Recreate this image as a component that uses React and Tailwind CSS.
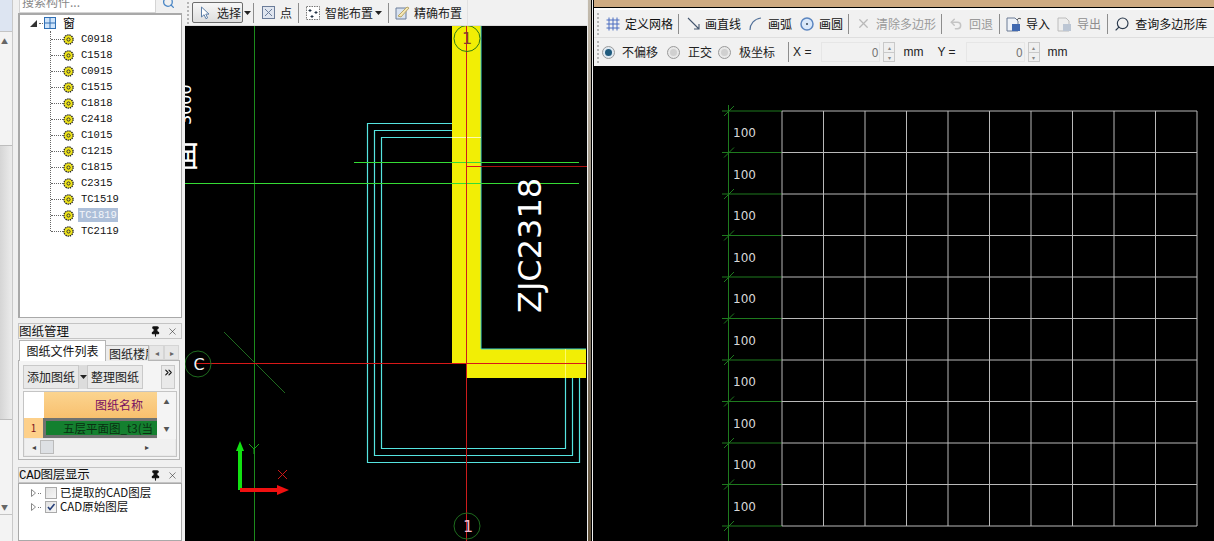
import React from 'react'
import { ChevronsRight, Pin, X, Search, Undo2 } from 'lucide-react'

const WINDOWS = ['C0918', 'C1518', 'C0915', 'C1515', 'C1818', 'C2418', 'C1015', 'C1215', 'C1815', 'C2315', 'TC1519', 'TC1819', 'TC2119']
const GRID_X = [782, 823.5, 865, 906.5, 948, 989.5, 1031, 1072.5, 1114, 1155.5, 1197]
const GRID_Y = [111, 152.5, 194, 235.5, 277, 318.5, 360, 401.5, 443, 484.5, 526]

const Gear = () => (
  <svg width="11" height="11" viewBox="0 0 11 11" className="shrink-0">
    <circle cx="5.5" cy="5.5" r="4.6" fill="#f3e81a" stroke="#222" strokeWidth="1.3" strokeDasharray="1.4 0.8" />
    <circle cx="5.5" cy="5.5" r="1.6" fill="#f3e81a" stroke="#333" strokeWidth="1" />
  </svg>
)

const Sep = ({ className = '' }) => <div className={`w-px h-[20px] bg-[#8d8d8d] shrink-0 ${className}`} />

const Grip = () => <div className="w-[2px] h-[22px] border-l-2 border-dotted border-[#b5b5b5] shrink-0" />

const Caret = ({ className = '' }) => (
  <svg width="7" height="4" viewBox="0 0 7 4" className={`shrink-0 ${className}`}><path d="M0 0h7L3.5 4z" fill="#222" /></svg>
)

const PanelTitle = ({ children }) => (
  <div className="h-[16px] w-[164px] flex items-center bg-[#efefef] border border-[#c4c4c4] text-[12.5px] leading-none text-[#111] overflow-hidden">
    <span className="whitespace-nowrap flex-1">{children}</span>
    <Pin size={11} strokeWidth={2.4} color="#111" fill="#111" className="mr-[6px]" />
    <X size={11} strokeWidth={1.2} color="#222" className="mr-[3px]" />
  </div>
)

const Tree = () => (
  <div className="h-[305px] w-[164px] bg-white border-2 border-[#a9a9a9] border-r border-b overflow-hidden">
    <div className="h-[16px] flex items-center pl-[10px]">
      <svg width="7" height="7" viewBox="0 0 7 7" className="shrink-0"><path d="M7 0v7H0z" fill="#333" /></svg>
      <div className="w-[4px] border-t border-dotted border-[#666] ml-[2px] mr-[1px]" />
      <svg width="12" height="12" viewBox="0 0 12 12" className="shrink-0">
        <rect x="0.5" y="0.5" width="11" height="11" fill="#cfe4fa" stroke="#2f6fb5" />
        <path d="M6 1v10M1 6h10" stroke="#2f6fb5" />
      </svg>
      <span className="ml-[7px] text-[12px] leading-none text-black">窗</span>
    </div>
    <div className="ml-[30px] h-[200px] border-l border-dotted border-[#666]">
      {WINDOWS.map((name) => (
        <div key={name} className="h-[16px] flex items-center">
          <div className="w-[12px] border-t border-dotted border-[#666] shrink-0" />
          <Gear />
          {name === 'TC1819' ? (
            <span className="ml-[5px] px-[1px] -translate-x-px bg-[#adbfd9] text-[#f4f6fa] font-['Liberation_Mono',monospace] text-[10.5px] leading-[14px]">{name}</span>
          ) : (
            <span className="ml-[7px] text-[#111] font-['Liberation_Mono',monospace] text-[10.5px] leading-[14px]">{name}</span>
          )}
        </div>
      ))}
    </div>
  </div>
)

const DrawingsPanel = () => (
  <div className="w-[164px]">
    <PanelTitle>图纸管理</PanelTitle>
    <div className="h-[22px] flex items-end pl-px relative z-10">
      <div className="h-[21px] w-[87px] bg-white border border-b-0 border-[#b5b5b5] text-[12px] leading-[20px] text-center text-[#111]">图纸文件列表</div>
      <div className="h-[16px] w-[43px] bg-[#ececec] border-t border-r border-[#b5b5b5] text-[12px] leading-[15px] pl-[3px] overflow-hidden whitespace-nowrap text-[#222]">图纸楼层</div>
      <div className="h-[15px] w-[15px] mb-[1px] bg-[#e6e6e6] border border-[#d5d5d5] text-[8px] leading-[13px] text-center text-[#666]">◂</div>
      <div className="h-[15px] w-[15px] mb-[1px] bg-[#e6e6e6] border border-[#d5d5d5] text-[8px] leading-[13px] text-center text-[#666]">▸</div>
    </div>
    <div className="h-[100px] w-[162px] bg-[#f4f4f4] border border-[#b5b5b5] -mt-px p-[4px]">
      <div className="h-[24px] flex text-[12px] leading-[22px] text-[#222]">
        <div className="w-[58px] bg-[#e9e9e9] border border-[#c9c9c9] text-center">添加图纸</div>
        <div className="w-[8px] bg-[#dcdcdc] flex items-center justify-center"><Caret /></div>
        <div className="w-[58px] bg-[#e9e9e9] border border-[#c9c9c9] text-center">整理图纸</div>
        <div className="w-[19px]" />
        <div className="w-[14px] bg-[#e9e9e9] border border-[#c9c9c9] flex justify-center pt-[1px]"><ChevronsRight size={11} strokeWidth={2.4} color="#111" /></div>
      </div>
      <div className="mt-[2px] h-[66px] w-[154px] bg-[#e9e9e9] border border-[#c4c4c4]">
        <div className="flex h-[47px]">
          <div className="w-[133px] shrink-0">
            <div className="flex h-[26px]">
              <div className="w-[20px] bg-white" />
              <div className="w-[113px] bg-gradient-to-b from-[#fbd48f] to-[#f8c06e] text-[12px] leading-[26px] text-[#7a1060] pl-[51px] whitespace-nowrap">图纸名称</div>
            </div>
            <div className="flex h-[20px]">
              <div className="w-[19px] bg-[#fdd08a] text-[10px] leading-[20px] text-center text-[#7a1020]">1</div>
              <div className="w-[114px] bg-[#14802f] border-[3px] border-[#6f7270] border-r-0 text-[11.5px] leading-[14px] text-[#0a2f12] pl-[17px] whitespace-nowrap overflow-hidden">五层平面图_t3(当</div>
            </div>
          </div>
          <div className="flex-1 flex flex-col items-center justify-between py-[7px] bg-[#f4f4f4] text-[6px] leading-none text-[#555]">
            <span>▲</span>
            <span>▼</span>
          </div>
        </div>
        <div className="h-[16px] flex items-center bg-[#f0f0f0] text-[8px] text-[#444] mx-px">
          <span className="ml-[7px]">◂</span>
          <div className="ml-[4px] w-[14px] h-[14px] bg-[#dde0e4] border border-[#bbb]" />
          <span className="ml-[91px]">▸</span>
        </div>
      </div>
    </div>
  </div>
)

const LayerRow = ({ label, checked }) => (
  <div className="h-[14px] flex items-center pl-[12px]">
    <svg width="5" height="8" viewBox="0 0 5 8" className="shrink-0"><path d="M.5.5 4.500 4 .5 7.500z" fill="#fff" stroke="#888" /></svg>
    <div className="w-[3px] border-t border-dotted border-[#777] ml-[2px] mr-[4px]" />
    <div className="w-[12px] h-[12px] bg-gradient-to-br from-[#e2e2e2] to-[#f7f7f7] border border-[#aaa] flex items-center justify-center shrink-0">
      {checked && <svg width="10" height="10" viewBox="0 0 10 10"><path d="M2 5l2 2.500L8.500 2" fill="none" stroke="#27407a" strokeWidth="1.6" /></svg>}
    </div>
    <span className="ml-[3px] text-[11.5px] leading-none whitespace-nowrap text-[#111]">{label}</span>
  </div>
)

const LeftColumn = () => (
  <div className="w-[185px] h-full shrink-0 flex bg-[#f0f0f0] overflow-hidden">
    <div className="w-[18px] h-full shrink-0 flex">
      <div className="w-[13px] h-full flex flex-col bg-[#f3f3f3] border-r border-[#c9c9c9]">
        <div className="h-[32px] bg-[#dde5f2] border-b border-[#c4c4c4]" />
        <div className="h-[113px] pt-[6px] pl-[1px] text-[7px] leading-none text-[#666]">▲</div>
        <div className="h-[275px] bg-gradient-to-r from-[#d5d5d5] to-[#ececec] border-y border-[#bdbdbd]" />
        <div className="h-[94px] flex items-end pb-[3px] pl-[1px] text-[7px] leading-none text-[#666]">▼</div>
        <div className="flex-1 border-t border-[#c4c4c4]" />
      </div>
    </div>
    <div className="w-[164px] shrink-0 flex flex-col">
      <div className="h-[13px] flex items-end overflow-hidden pl-[1px]">
        <div className="w-[137px] h-[20px] bg-white border border-[#d4d4d4] text-[12px] leading-[16px] pl-[2px] text-[#888] whitespace-nowrap">搜索构件...</div>
        <div className="w-[25px] h-[13px] flex items-start justify-center"><Search size={13} strokeWidth={2.4} color="#4a86c5" className="-mt-[4px]" /></div>
      </div>
      <Tree />
      <div className="h-[5px]" />
      <DrawingsPanel />
      <div className="h-[7px]" />
      <PanelTitle><span className="font-['Liberation_Mono','Noto_Sans_CJK_SC',monospace] tracking-tight">CAD图层显示</span></PanelTitle>
      <div className="flex-1 bg-white border border-[#a9a9a9] pt-[2px]">
        <LayerRow label="已提取的CAD图层" />
        <LayerRow label="CAD原始图层" checked />
      </div>
    </div>
  </div>
)

const CenterToolbar = () => (
  <div className="h-[26px] shrink-0 flex items-center bg-[#f1f1f1] border-b border-[#dcdcdc] text-[12px] text-[#222] pl-[2px] whitespace-nowrap">
    <Grip />
    <div className="ml-[3px] h-[21px] w-[51px] flex items-center pl-[7px] bg-gradient-to-b from-[#f7f7f7] to-[#dedede] border border-[#6d6d6d] rounded-[2px]">
      <svg width="10" height="14" viewBox="0 0 10 14"><path d="M1.5 1v10l2.600-2.300 1.800 4 1.700-.8-1.800-3.800h3.200z" fill="#fff" stroke="#5d7fa8" /></svg>
      <span className="ml-[7px]">选择</span>
    </div>
    <Caret className="ml-[1px]" />
    <Sep className="ml-[2px]" />
    <svg width="13" height="13" viewBox="0 0 13 13" className="ml-[8px]"><rect x=".5" y=".5" width="12" height="12" fill="#dfe5ef" stroke="#6b7c99" /><path d="M3 3l7 7M10 3l-7 7" stroke="#6b7c99" /></svg>
    <span className="ml-[5px]">点</span>
    <Sep className="ml-[6px]" />
    <svg width="14" height="14" viewBox="0 0 14 14" className="ml-[7px]"><rect x=".5" y=".5" width="13" height="13" fill="#fff" stroke="#777" strokeDasharray="1.500 1" /><path d="M4 3v3M2.500 4.500h3M10 5v3M8.500 6.500h3M6 9v3M4.500 10.500h3" stroke="#234" /></svg>
    <span className="ml-[5px]">智能布置</span>
    <Caret className="ml-[2px]" />
    <Sep className="ml-[6px]" />
    <svg width="15" height="15" viewBox="0 0 15 15" className="ml-[6px]"><path d="M1 3h10v11H1z" fill="#d8e2f0" stroke="#6b7c99" /><path d="M3 11l9-9 2 1-8 9z" fill="#f5e7b5" stroke="#b9a76a" /></svg>
    <span className="ml-[4px]">精确布置</span>
    <div className="ml-[5px] w-px h-full bg-[#e2e2e2]" />
  </div>
)

const CadCanvas = () => (
  <svg viewBox="185 26 402 515" className="w-full flex-1 min-h-0 bg-black block">
    <path d="M452 26H481V349H586V378H467V363H452Z" fill="#f2ee05" />
    <path d="M481 26V349H586" fill="none" stroke="#3fd8d0" strokeWidth="1" />
    <path d="M565.500 349V378" stroke="#fdfa6a" />
    <g fill="none" stroke="#55e4e0" strokeWidth="1.200">
      <path d="M452 123.500H367.500V462.500H579.500V378" />
      <path d="M452 130.500H374.500V455.500H572.500V378" />
      <path d="M452 137.500H381.500V448.500H565.500V378" />
    </g>
    <path d="M452 137.500H481" stroke="#fbf9b0" />
    <path d="M254.500 26V541" stroke="#1c8a1c" />
    <path d="M224 332L285 393" stroke="#1f6b1f" />
    <path d="M354 162.500H579M185 183.500H579" stroke="#35dc35" />
    <path d="M466.500 26V541" stroke="#cc1c1c" />
    <path d="M195 363.500H586" stroke="#d81818" />
    <path d="M467 166.500H481" stroke="#d81818" />
    <path d="M481 166.500H587" stroke="#a81010" />
    <circle cx="467" cy="38.500" r="13" fill="none" stroke="#2d7a14" />
    <circle cx="198" cy="364" r="13" fill="none" stroke="#1e6b1e" />
    <circle cx="467" cy="526" r="13" fill="none" stroke="#1e6b1e" />
    <text x="467" y="44" textAnchor="middle" fontSize="16" fontFamily="DejaVu Sans, sans-serif" fill="#8a3a30">1</text>
    <text x="199" y="370" textAnchor="middle" fontSize="16" fontFamily="DejaVu Sans, sans-serif" fill="#f2f2f2">C</text>
    <text x="468" y="532" textAnchor="middle" fontSize="16" fontFamily="DejaVu Sans, sans-serif" fill="#f4b8cc">1</text>
    <text transform="translate(541 313) rotate(-90)" fontSize="32" fontFamily="DejaVu Sans, sans-serif" fill="#fff">ZJC2318</text>
    <text transform="translate(191 125) rotate(-90)" fontSize="16" fontFamily="DejaVu Sans, sans-serif" fill="#fff">3000</text>
    <text transform="translate(194 172) rotate(-90)" fontSize="32" fontFamily="Noto Sans CJK SC, sans-serif" fill="#fff">面</text>
    <path d="M240 490V449" stroke="#12e012" strokeWidth="4" />
    <path d="M240 441l-4 10h8z" fill="#12e012" />
    <path d="M240 490H278" stroke="#f01010" strokeWidth="4" />
    <path d="M289 490l-12-5v10z" fill="#f01010" />
    <path d="M249 444l5 5 5-5M254 449v5" fill="none" stroke="#18a018" />
    <path d="M278 470l9 9M287 470l-9 9" stroke="#d01818" />
  </svg>
)

const Radio = ({ on }) => (
  <div className={`w-[13px] h-[13px] rounded-full border border-[#9a9a9a] flex items-center justify-center shrink-0 ${on ? 'bg-[#dfe9f2]' : 'bg-[#e8e8e8]'}`}>
    <div className={`w-[7px] h-[7px] rounded-full ${on ? 'bg-[#1f5a7d]' : 'bg-[#d0d0d0]'}`} />
  </div>
)

const Spin = ({ inputWidth, className = '' }) => (
  <div className={`flex items-center shrink-0 ${className}`}>
    <div className={`h-[20px] bg-[#f1f1f1] border border-[#e6e6e6] text-right pr-[1px] text-[12px] leading-[18px] text-[#777] ${inputWidth}`}>0</div>
    <div className="ml-[3px] w-[12px] h-[20px] flex flex-col border border-[#c9c9c9] bg-[#efefef] text-[6px] leading-[9px] text-center text-[#888]">
      <span className="flex-1 border-b border-[#c9c9c9]">▴</span>
      <span className="flex-1">▾</span>
    </div>
  </div>
)

const PolygonToolbars = () => (
  <>
    <div className="h-[27px] shrink-0 flex items-center bg-[#f1f1f1] pl-[3px] text-[12px] text-[#111] whitespace-nowrap">
      <Grip />
      <svg width="14" height="14" viewBox="0 0 14 14" className="ml-[7px]"><path d="M.5 3h13M.5 7h13M.5 11h13M3 .5v13M7 .5v13M11 .5v13" stroke="#4a6cc0" /></svg>
      <span className="ml-[5px]">定义网格</span>
      <Sep className="ml-[5px]" />
      <svg width="14" height="14" viewBox="0 0 14 14" className="ml-[8px]"><path d="M1 1l11 11M12 7v5H7" fill="none" stroke="#44566e" strokeWidth="1.100" /></svg>
      <span className="ml-[4px]">画直线</span>
      <svg width="13" height="14" viewBox="0 0 13 14" className="ml-[8px]"><path d="M1 13C1 7 5 2 12 1" fill="none" stroke="#54729a" strokeWidth="1.200" /></svg>
      <span className="ml-[6px]">画弧</span>
      <svg width="14" height="14" viewBox="0 0 14 14" className="ml-[8px]"><circle cx="7" cy="7" r="6" fill="#d9e8fa" stroke="#5c86c0" strokeWidth="1.500" /><circle cx="7" cy="7" r="1" fill="#345" /></svg>
      <span className="ml-[5px]">画圆</span>
      <Sep className="ml-[5px]" />
      <X size={15} strokeWidth={2} color="#b9b9b9" className="ml-[7px]" />
      <span className="ml-[5px] text-[#9a9a9a]">清除多边形</span>
      <Sep className="ml-[5px]" />
      <Undo2 size={14} strokeWidth={2.500} color="#c4c4c4" className="ml-[7px]" />
      <span className="ml-[6px] text-[#9a9a9a]">回退</span>
      <Sep className="ml-[6px]" />
      <svg width="16" height="16" viewBox="0 0 16 16" className="ml-[6px]"><path d="M1 2h8l3 3v10H1z" fill="#eef2f8" stroke="#6a7a94" /><rect x="6" y="8" width="8" height="7" fill="#3f68b0" /><path d="M11 4c1-2 3-2 4-1" fill="none" stroke="#555" /></svg>
      <span className="ml-[4px]">导入</span>
      <svg width="16" height="16" viewBox="0 0 16 16" className="ml-[7px]"><path d="M1 2h8l3 3v10H1z" fill="#eee" stroke="#bcbcbc" /><rect x="6" y="8" width="8" height="7" fill="#bcc6d4" /></svg>
      <span className="ml-[4px] text-[#8f8f8f]">导出</span>
      <Sep className="ml-[6px]" />
      <Search size={16} strokeWidth={1.700} color="#2b3a4d" className="ml-[6px] -scale-x-100" />
      <span className="ml-[5px]">查询多边形库</span>
    </div>
    <div className="h-[29px] shrink-0 flex items-center bg-[#f1f1f1] border-t border-[#dedede] pl-[3px] text-[12px] text-[#222] whitespace-nowrap">
      <Grip />
      <div className="ml-[3px]"><Radio on /></div>
      <span className="ml-[7px]">不偏移</span>
      <div className="ml-[9px]"><Radio /></div>
      <span className="ml-[8px]">正交</span>
      <div className="ml-[6px]"><Radio /></div>
      <span className="ml-[8px]">极坐标</span>
      <Sep className="ml-[13px]" />
      <span className="ml-[4px] font-['Liberation_Sans',sans-serif]">X =</span>
      <Spin inputWidth="w-[59px]" className="ml-[10px]" />
      <span className="ml-[8px] font-['Liberation_Sans',sans-serif]">mm</span>
      <span className="ml-[14px] font-['Liberation_Sans',sans-serif]">Y =</span>
      <Spin inputWidth="w-[59px]" className="ml-[10px]" />
      <span className="ml-[8px] font-['Liberation_Sans',sans-serif]">mm</span>
    </div>
  </>
)

const GridCanvas = () => (
  <svg viewBox="594 66 620 475" className="w-full flex-1 min-h-0 bg-black block">
    {GRID_Y.map((y) => (
      <g key={y}>
        <path d={`M782 ${y}H1197`} stroke="#b9b9b9" />
        <path d={`M722 ${y}H782`} stroke="#1e7a1e" />
        <path d={`M724 ${y + 5}L734 ${y - 5}`} stroke="#1e7a1e" />
      </g>
    ))}
    {GRID_X.map((x) => <path key={x} d={`M${x} 111V526`} stroke="#b9b9b9" />)}
    <path d="M728.500 105V541" stroke="#1e7a1e" />
    {GRID_Y.slice(0, -1).map((y) => (
      <text key={y} x="733" y={y + 26} fontSize="12" fontFamily="DejaVu Sans, sans-serif" fill="#d8d8d8">100</text>
    ))}
  </svg>
)

const App = () => (
  <div className="w-[1214px] h-[541px] flex overflow-hidden bg-black font-['Noto_Sans_CJK_SC','Liberation_Sans',sans-serif]">
    <LeftColumn />
    <div className="w-[402px] h-full shrink-0 flex flex-col">
      <CenterToolbar />
      <CadCanvas />
    </div>
    <div className="w-[7px] h-full shrink-0 flex">
      <div className="w-px bg-[#ececec]" />
      <div className="w-[3px] bg-gradient-to-b from-[#c4bcae] via-[#8d8474] to-[#5f5038]" />
      <div className="w-px bg-black" />
      <div className="w-px bg-[#f0f0f0]" />
      <div className="w-px bg-black" />
    </div>
    <div className="flex-1 h-full flex flex-col">
      <div className="h-[8px] shrink-0 bg-[#cfab82] border-b border-black" />
      <div className="h-[2px] shrink-0 bg-white" />
      <PolygonToolbars />
      <GridCanvas />
    </div>
  </div>
)

export default App
